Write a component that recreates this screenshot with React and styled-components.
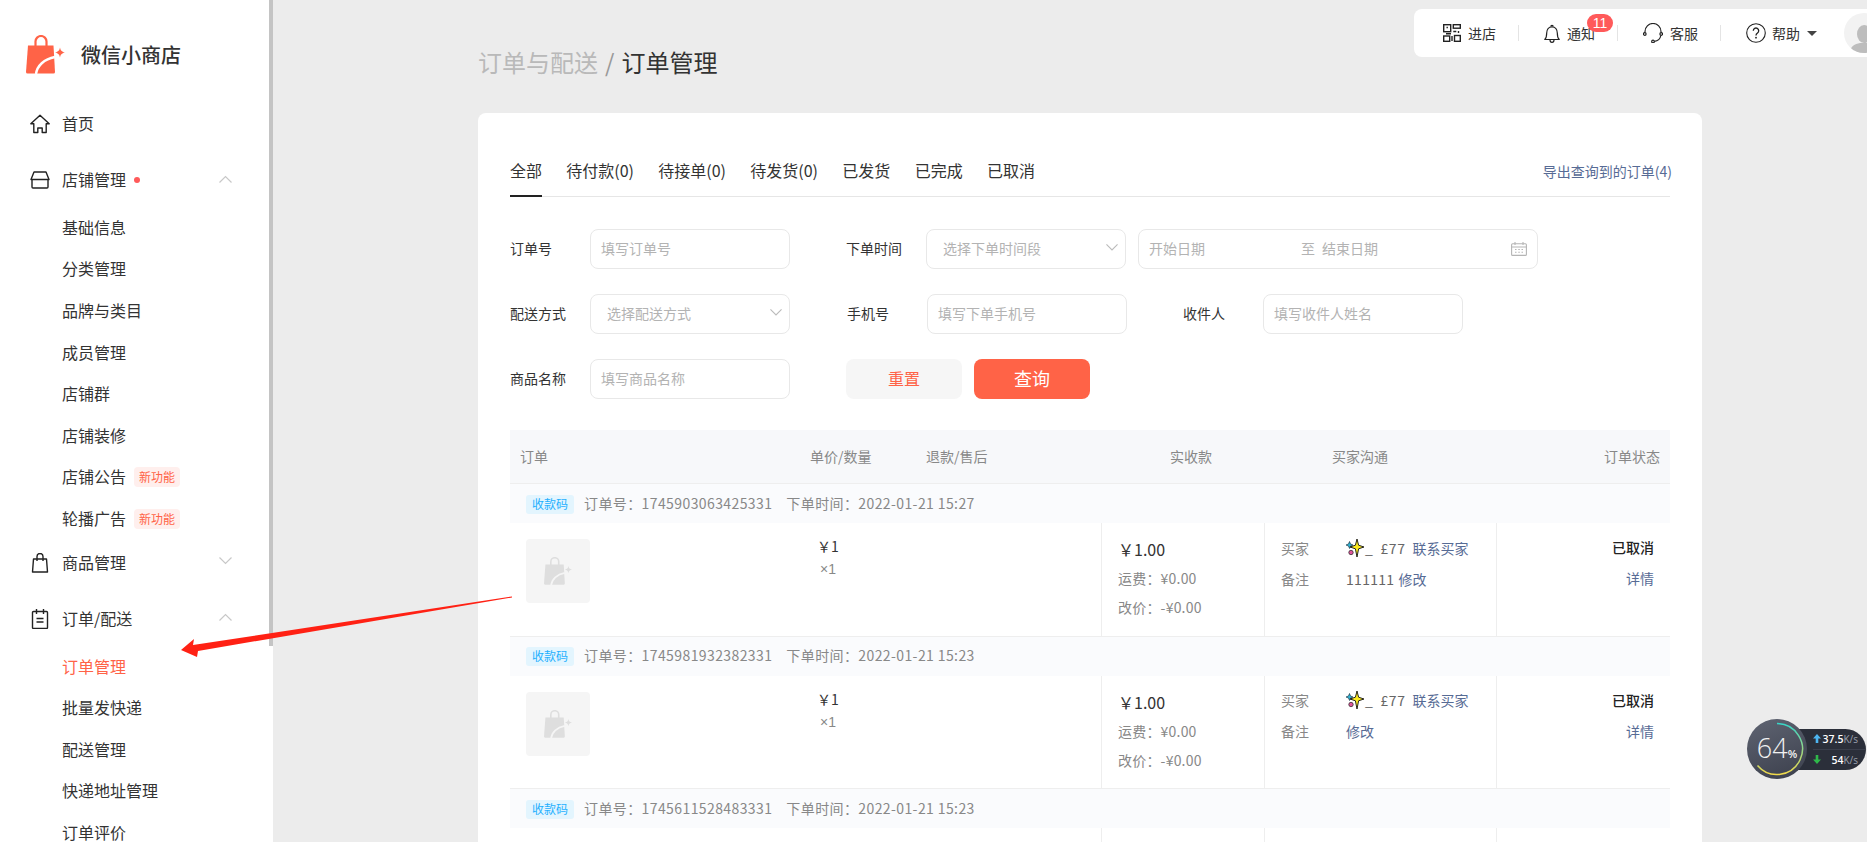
import styled, { createGlobalStyle } from "styled-components"

const GlobalStyle = createGlobalStyle`
  html, body {
    margin: 0;
    padding: 0;
    height: 100%;
    overflow: hidden;
    background: #ececec;
    font-family: "Noto Sans CJK SC", "Noto Sans", sans-serif;
    color: #333;
  }
  * { box-sizing: border-box; }
`

const orange = "#ff6347"
const linkBlue = "#576b95"

const orders = [
  { id: "1745903063425331", time: "2022-01-21 15:27", note: "111111" },
  { id: "1745981932382331", time: "2022-01-21 15:23", note: "" },
  { id: "1745611528483331", time: "2022-01-21 15:23", note: "" },
]

const BagLogo = ({ size = 39, color = orange, arc = "#fff" }) => (
  <svg width={size} height={size} viewBox="0 0 39 39">
    <path d="M9.5 11V6.5a5.5 5.5 0 0 1 11 0V11" fill="none" stroke={color} strokeWidth="2.2" />
    <path d="M2 10.5h25.5L29 37a1.5 1.5 0 0 1-1.5 1.5H1.5A1.500 1.500 0 0 1 0 37z" fill={color} />
    <path d="M10 39C11 31 18 24 29 22" fill="none" stroke={arc} strokeWidth="2.4" />
    <path d="M34 12.500c.6 3 1.600 4.200 5 5-3.400.8-4.400 2-5 5-.6-3-1.600-4.200-5-5 3.400-.8 4.400-2 5-5z" fill={color} />
  </svg>
)

const HomeIcon = () => (
  <svg width="20" height="20" viewBox="0 0 20 20" fill="none" stroke="#222" strokeWidth="1.4">
    <path d="M.8 9.700 10 1.200l9.200 8.500h-3v8.800h-4v-4.500h-4.400v4.500h-4V9.700z" strokeLinejoin="round" />
  </svg>
)

const StoreIcon = () => (
  <svg width="20" height="18" viewBox="0 0 20 18" fill="none" stroke="#222" strokeWidth="1.4">
    <path d="M4 1h12l3 7.500H1z" strokeLinejoin="round" />
    <path d="M2 8.500V16a1 1 0 0 0 1 1h14a1 1 0 0 0 1-1V8.500" />
  </svg>
)

const ShopBagIcon = () => (
  <svg width="20" height="20" viewBox="0 0 20 20" fill="none" stroke="#222" strokeWidth="1.4">
    <path d="M3.500 6h13l1 13h-15z" strokeLinejoin="round" />
    <path d="M7 8V3.500a3 3 0 0 1 6 0V8" />
  </svg>
)

const NoteIcon = () => (
  <svg width="20" height="20" viewBox="0 0 20 20" fill="none" stroke="#222" strokeWidth="1.4">
    <rect x="2.500" y="2.500" width="15" height="17" rx="1" />
    <path d="M6.500 0v5M13.500 0v5M6.500 9.500h7M6.500 13h7" />
  </svg>
)

const Chevron = ({ up, color = "#c8c8c8", width = 13 }) => (
  <svg width={width} height={(width * 8) / 13} viewBox="0 0 13 8" fill="none" stroke={color} strokeWidth="1.200">
    <path d={up ? "M.5 7.500 6.500 1.500l6 6" : "M.5.500l6 6 6-6"} />
  </svg>
)

const QrIcon = () => (
  <svg width="18" height="18" viewBox="0 0 18 18" fill="none" stroke="#222" strokeWidth="1.400">
    <rect x=".7" y=".7" width="7" height="7" />
    <rect x="10.300" y=".7" width="7" height="3.500" />
    <rect x=".7" y="12" width="6" height="5.300" />
    <rect x="11.500" y="11.500" width="5.800" height="5.800" />
    <path d="M3.500 3.500h1.400M10.300 7.500h3M15.500 7v2M9 12v5M3 9.800h5" />
  </svg>
)

const BellIcon = () => (
  <svg width="16" height="20" viewBox="0 0 16 20" fill="none" stroke="#222" strokeWidth="1.200">
    <path d="M.8 16.500c1.500-1.500 1.900-3 1.900-6.500 0-3.500 2-6.200 5.300-6.200s5.300 2.700 5.300 6.200c0 3.500.4 5 1.900 6.500z" strokeLinejoin="round" />
    <path d="M6.800 3.500a1.200 1.200 0 0 1 2.400 0M6 17c0 1.500 1 2.300 2 2.300s2-.8 2-2.300" />
  </svg>
)

const HeadsetIcon = () => (
  <svg width="20" height="20" viewBox="0 0 20 20" fill="none" stroke="#222" strokeWidth="1.200">
    <path d="M2 9.500V8.500a8 8 0 0 1 16 0v1" />
    <circle cx="1.800" cy="11" r="1.300" />
    <circle cx="18.200" cy="11" r="1.300" />
    <path d="M17.800 12.500c-.6 3.500-3 5.500-6.500 5.800" />
    <circle cx="10" cy="18.500" r="1.300" />
  </svg>
)

const HelpIcon = () => (
  <svg width="20" height="20" viewBox="0 0 20 20" fill="none" stroke="#222" strokeWidth="1.100">
    <circle cx="10" cy="10" r="9.300" />
    <path d="M7.300 7.700a2.700 2.700 0 1 1 4.200 2.300c-1 .7-1.500 1.200-1.500 2.400" strokeWidth="1.300" />
    <circle cx="10" cy="14.700" r=".9" fill="#222" stroke="none" />
  </svg>
)

const CalendarIcon = () => (
  <svg width="16" height="14" viewBox="0 0 16 14" fill="none" stroke="#b5b5b5" strokeWidth="1.100">
    <rect x=".6" y="1.800" width="14.800" height="11.600" rx="1" />
    <path d="M.6 5h14.800M4 0v3M12 0v3" />
    <path d="M4 7.500h1.500M7.300 7.500h1.500M10.500 7.500H12M4 10.300h1.500M7.300 10.300h1.500M10.500 10.300H12" />
  </svg>
)

const SparkleEmoji = () => (
  <svg width="18" height="18" viewBox="0 0 18 18">
    <path d="M3.500 2.500 4.500 5l2.500 1-2.500 1-1 2.500-1-2.500L0 6l2.500-1z" fill="#2fb7d8" stroke="#123" strokeWidth=".6" />
    <circle cx="5" cy="13.500" r="2.200" fill="#e0559a" stroke="#222" strokeWidth=".7" />
    <path d="M11 0l1.600 6.200L18 8l-5.400 1.800L11 18 9.400 9.800 4 8l5.400-1.800z" fill="#fdeb1f" stroke="#111" strokeWidth=".9" strokeLinejoin="round" />
  </svg>
)

const SpeedArrowIcon = ({ down, color }) => (
  <svg width="8" height="9" viewBox="0 0 8 9" fill={color}>
    <path d={down ? "M2.700 0h2.600v4.500H8L4 9 0 4.500h2.700z" : "M4 0l4 4.500H5.300V9H2.700V4.500H0z"} />
  </svg>
)

const Page = styled.div`
  display: flex;
  position: relative;
  width: 100vw;
  height: 100vh;
  overflow: hidden;
`

const Sidebar = styled.aside`
  flex: 0 0 273px;
  display: flex;
  background: #fff;
  height: 100%;
  overflow: hidden;
`

const SideNav = styled.nav`
  flex: 0 0 269px;
`

const ScrollThumb = styled.div`
  flex: 0 0 4px;
  height: 646px;
  background: #c4c4c4;
`

const Brand = styled.div`
  display: flex;
  align-items: center;
  height: 96px;
  padding: 13px 0 0 26px;
  svg { flex: none; }
`

const BrandName = styled.span`
  margin-left: 16px;
  font-size: 20px;
  font-weight: 500;
  color: #333;
`

const ParentItem = styled.div`
  display: flex;
  align-items: center;
  height: 56px;
  padding: 0 0 2px 30px;
  font-size: 16px;
  color: #333;
`

const IconSlot = styled.span`
  flex: 0 0 20px;
  display: flex;
  justify-content: center;
  margin: 2px 12px 0 0;
`

const RedDot = styled.i`
  width: 6px;
  height: 6px;
  margin: 2px 0 0 8px;
  border-radius: 50%;
  background: #ff5a5a;
`

const ChevronSlot = styled.span`
  display: flex;
  margin-left: auto;
  margin-right: 37px;
  margin-top: -1px;
`

const SubList = styled.div`
  margin: -1px 0 -5px;
`

const SubItem = styled.div`
  display: flex;
  align-items: center;
  height: 41.6px;
  padding: 0 0 2px 62px;
  font-size: 16px;
  color: ${(p) => (p.$active ? orange : "#333")};
`

const NewBadge = styled.span`
  width: 46px;
  height: 20px;
  margin: 2px 0 0 8px;
  border-radius: 4px;
  background: #ffefed;
  color: ${orange};
  font-size: 12px;
  line-height: 19px;
  text-align: center;
`

const Main = styled.main`
  flex: 1;
  min-width: 0;
  height: 100%;
  overflow: hidden;
`

const Header = styled.header`
  display: flex;
  align-items: flex-start;
  height: 113px;
  padding-left: 205px;
`

const PageTitle = styled.h1`
  margin: 44px 0 0;
  font-size: 24px;
  font-weight: 400;
  line-height: 36px;
  color: #333;
  span { color: #b9b9b9; }
  i { margin: 0 7px; font-style: normal; color: #999; }
`

const TopBar = styled.div`
  display: flex;
  align-items: center;
  width: 453px;
  height: 48px;
  margin: 9px 0 0 auto;
  padding-left: 29px;
  background: #fff;
  border-radius: 8px 0 0 8px;
  overflow: hidden;
`

const TopItem = styled.div`
  position: relative;
  display: flex;
  align-items: center;
  gap: ${(p) => p.$gap ?? 7}px;
  font-size: 14px;
  color: #333;
  white-space: nowrap;
`

const TopDivider = styled.i`
  flex: none;
  width: 1px;
  height: 16px;
  margin: 0 25px 0 22px;
  background: #e4e4e4;
`

const CountBadge = styled.span`
  position: absolute;
  left: 43px;
  top: -9px;
  width: 26px;
  height: 18px;
  border-radius: 9px;
  background: #ff5a5a;
  color: #fff;
  font-family: "Liberation Sans", sans-serif;
  font-size: 14px;
  line-height: 18px;
  text-align: center;
`

const Caret = styled.i`
  width: 0;
  height: 0;
  margin-left: 1px;
  border-left: 5px solid transparent;
  border-right: 5px solid transparent;
  border-top: 5px solid #444;
`

const Avatar = styled.div`
  flex: none;
  display: flex;
  justify-content: center;
  align-items: flex-end;
  width: 40px;
  height: 40px;
  margin-left: 27px;
  border-radius: 50%;
  background: #f2f2f2;
  overflow: hidden;
`

const Card = styled.section`
  width: 1224px;
  height: 900px;
  margin-left: 205px;
  padding: 40px 32px 0;
  background: #fff;
  border-radius: 8px;
`

const Tabs = styled.div`
  display: flex;
  align-items: flex-start;
  gap: 24.3px;
  height: 44px;
  border-bottom: 1px solid #e6e6e6;
`

const Tab = styled.div`
  height: 44px;
  font-size: 16px;
  line-height: 34px;
  color: #333;
  border-bottom: 2px solid ${(p) => (p.$active ? "#222" : "transparent")};
`

const ExportLink = styled.a`
  margin: 0 -2px 0 auto;
  font-size: 14px;
  line-height: 36px;
  color: ${linkBlue};
`

const Form = styled.div`
  display: flex;
  flex-direction: column;
  gap: 25px;
  margin-top: 32px;
`

const FormRow = styled.div`
  display: flex;
  align-items: center;
  height: 40px;
`

const Field = styled.label`
  display: flex;
  align-items: center;
  margin-right: ${(p) => p.$gap ?? 56}px;
`

const FieldLabel = styled.span`
  flex: 0 0 80px;
  padding-bottom: 2px;
  font-size: 14px;
  color: #333;
`

const TextInput = styled.input`
  width: 200px;
  height: 40px;
  padding: 0 10px 2px;
  border: 1.5px solid #e8e8e8;
  border-radius: 8px;
  outline: none;
  background: #fff;
  font: inherit;
  font-size: 14px;
  &::placeholder { color: #b3b3b3; opacity: 1; }
`

const SelectBox = styled.div`
  display: flex;
  align-items: center;
  justify-content: space-between;
  width: 200px;
  height: 40px;
  padding: 0 7px 2px 16px;
  border: 1.5px solid #e8e8e8;
  border-radius: 8px;
  font-size: 14px;
  color: #b3b3b3;
`

const DateRange = styled.div`
  display: flex;
  align-items: center;
  width: 400px;
  height: 40px;
  margin-left: -44px;
  padding: 0 10px 2px;
  border: 1.5px solid #e8e8e8;
  border-radius: 8px;
  font-size: 14px;
  color: #b3b3b3;
`

const DateStart = styled.span`
  flex: 0 0 152px;
`

const DateTo = styled.span`
  margin-right: 7px;
`

const CalendarSlot = styled.span`
  display: flex;
  margin: 2px 0 0 auto;
`

const ResetButton = styled.button`
  width: 116px;
  height: 40px;
  padding: 0 0 2px;
  border: none;
  border-radius: 8px;
  background: #f6f6f6;
  color: ${orange};
  font: inherit;
  font-size: 16px;
`

const SearchButton = styled(ResetButton)`
  margin-left: 12px;
  background: ${orange};
  color: #fff;
  font-size: 18px;
`

const Table = styled.div`
  margin-top: 31px;
`

const TableHead = styled.div`
  display: grid;
  grid-template-columns: 290px 116px 244px 162px 1fr 1fr;
  align-items: center;
  height: 54px;
  padding: 0 10px 2px;
  background: #f7f8fa;
  border-bottom: 1px solid #eee;
  font-size: 14px;
  color: #888;
`

const HeadCell = styled.span`
  text-align: ${(p) => (p.$right ? "right" : "left")};
`

const OrderBar = styled.div`
  display: flex;
  align-items: center;
  height: 39px;
  padding: 0 0 2px 16px;
  background: #fafbfd;
  font-size: 14px;
  color: #888;
`

const PayTag = styled.span`
  width: 48px;
  height: 19px;
  margin: 3px 10px 0 0;
  border-radius: 3px;
  background: #e3f5fe;
  color: #1fb0ff;
  font-size: 12px;
  line-height: 18px;
  text-align: center;
`

const OrderNo = styled.span`
  margin-right: 14px;
  letter-spacing: 0.4px;
`

const OrderTime = styled.span`
  letter-spacing: 0.4px;
`

const OrderBody = styled.div`
  display: grid;
  grid-template-columns: 591px 163px 232px 174px;
  height: 113.5px;
  border-bottom: 1px solid #eee;
`

const GoodsCell = styled.div`
  display: flex;
  padding: 16px 0 0 16px;
`

const Thumb = styled.div`
  flex: 0 0 64px;
  display: flex;
  align-items: center;
  justify-content: center;
  height: 64px;
  border-radius: 4px;
  background: #f5f5f5;
`

const GoodsPrice = styled.div`
  margin: -4px 0 0 227px;
  font-size: 14px;
  line-height: 23px;
  color: #333;
`

const GoodsQty = styled.div`
  margin-left: 3px;
  font-family: "Liberation Sans", sans-serif;
  color: #888;
`

const Cell = styled.div`
  padding: ${(p) => p.$top ?? 9}px 16px 0;
  border-left: 1px solid #eee;
  font-size: 14px;
`

const Amount = styled.div`
  font-size: 16px;
  line-height: 29px;
  color: #333;
`

const AmountNote = styled.div`
  line-height: 29px;
  letter-spacing: 0.2px;
  color: #888;
`

const InfoRow = styled.div`
  display: flex;
  align-items: center;
  height: 31px;
  color: #666;
`

const InfoLabel = styled.span`
  flex: 0 0 65px;
  color: #888;
`

const Buyer = styled.span`
  display: flex;
  align-items: center;
  gap: 1px;
  margin-right: 7px;
  letter-spacing: 0.5px;
  white-space: nowrap;
`

const NoteText = styled.span`
  letter-spacing: 0.3px;
`

const BlueLink = styled.a`
  margin-left: ${(p) => p.$gap ?? 0}px;
  color: ${linkBlue};
  white-space: nowrap;
`

const StatusCell = styled(Cell)`
  text-align: right;
`

const StatusText = styled.div`
  height: 31px;
  line-height: 31px;
  font-weight: 500;
  color: #222;
`

const DetailLine = styled.div`
  height: 31px;
  line-height: 31px;
`

const ArrowLayer = styled.svg`
  position: absolute;
  left: 0;
  top: 0;
  pointer-events: none;
`

const NetWidget = styled.div`
  position: absolute;
  left: 1747px;
  top: 719px;
  display: flex;
  align-items: center;
`

const Gauge = styled.div`
  position: relative;
  z-index: 1;
  display: flex;
  align-items: baseline;
  justify-content: center;
  width: 60px;
  height: 60px;
  padding-top: 12px;
  border-radius: 50%;
  background: linear-gradient(160deg, #5f6472, #3b3f4c);
  color: #f2f2f2;
  font-family: "Open Sans", sans-serif;
  font-weight: 300;
  font-size: 27px;
  line-height: 34px;
  small { font-size: 11px; font-weight: 600; }
`

const GaugeRing = styled.svg`
  position: absolute;
  inset: 0;
`

const SpeedPill = styled.div`
  display: flex;
  flex-direction: column;
  width: 90px;
  height: 41px;
  margin-left: -31px;
  padding-left: 37px;
  border-radius: 0 21px 21px 0;
  background: #2b2f3a;
`

const SpeedRow = styled.div`
  display: flex;
  align-items: center;
  justify-content: space-between;
  flex: 1;
  padding-right: 8px;
  color: #fff;
  font-family: "Open Sans", sans-serif;
  font-size: 10.5px;
  font-weight: 600;
  small { font-size: 10px; font-weight: 400; color: #9aa0ad; }
  & + & { border-top: 1px solid #3b3f4c; }
`

const storeSubs = ["基础信息", "分类管理", "品牌与类目", "成员管理", "店铺群", "店铺装修"]
const orderSubs = ["批量发快递", "配送管理", "快递地址管理", "订单评价"]
const tabs = ["全部", "待付款(0)", "待接单(0)", "待发货(0)", "已发货", "已完成", "已取消"]

const OrderRow = ({ order }) => (
  <>
    <OrderBar>
      <PayTag>收款码</PayTag>
      <OrderNo>订单号：{order.id}</OrderNo>
      <OrderTime>下单时间：{order.time}</OrderTime>
    </OrderBar>
    <OrderBody>
      <GoodsCell>
        <Thumb>
          <BagLogo size={28} color="#dedede" arc="#f5f5f5" />
        </Thumb>
        <GoodsPrice>
          ￥1
          <GoodsQty>×1</GoodsQty>
        </GoodsPrice>
      </GoodsCell>
      <Cell $top={12}>
        <Amount>￥1.00</Amount>
        <AmountNote>运费：¥0.00</AmountNote>
        <AmountNote>改价：-¥0.00</AmountNote>
      </Cell>
      <Cell>
        <InfoRow>
          <InfoLabel>买家</InfoLabel>
          <Buyer>
            <SparkleEmoji />_ &nbsp;£77
          </Buyer>
          <BlueLink>联系买家</BlueLink>
        </InfoRow>
        <InfoRow>
          <InfoLabel>备注</InfoLabel>
          <NoteText>{order.note}</NoteText>
          <BlueLink $gap={order.note ? 4 : 0}>修改</BlueLink>
        </InfoRow>
      </Cell>
      <StatusCell>
        <StatusText>已取消</StatusText>
        <DetailLine>
          <BlueLink>详情</BlueLink>
        </DetailLine>
      </StatusCell>
    </OrderBody>
  </>
)

const App = () => {
  return (
    <>
      <GlobalStyle />
      <Page>
        <Sidebar>
          <SideNav>
            <Brand>
              <BagLogo />
              <BrandName>微信小商店</BrandName>
            </Brand>
            <ParentItem>
              <IconSlot><HomeIcon /></IconSlot>首页
            </ParentItem>
            <ParentItem>
              <IconSlot><StoreIcon /></IconSlot>店铺管理<RedDot />
              <ChevronSlot><Chevron up /></ChevronSlot>
            </ParentItem>
            <SubList>
              {storeSubs.map((s) => <SubItem key={s}>{s}</SubItem>)}
              <SubItem>店铺公告<NewBadge>新功能</NewBadge></SubItem>
              <SubItem>轮播广告<NewBadge>新功能</NewBadge></SubItem>
            </SubList>
            <ParentItem>
              <IconSlot><ShopBagIcon /></IconSlot>商品管理
              <ChevronSlot><Chevron /></ChevronSlot>
            </ParentItem>
            <ParentItem>
              <IconSlot><NoteIcon /></IconSlot>订单/配送
              <ChevronSlot><Chevron up /></ChevronSlot>
            </ParentItem>
            <SubList>
              <SubItem $active>订单管理</SubItem>
              {orderSubs.map((s) => <SubItem key={s}>{s}</SubItem>)}
            </SubList>
          </SideNav>
          <ScrollThumb />
        </Sidebar>

        <Main>
          <Header>
            <PageTitle><span>订单与配送</span><i>/</i>订单管理</PageTitle>
            <TopBar>
              <TopItem><QrIcon />进店</TopItem>
              <TopDivider />
              <TopItem><BellIcon />通知<CountBadge>11</CountBadge></TopItem>
              <TopDivider />
              <TopItem><HeadsetIcon />客服</TopItem>
              <TopDivider />
              <TopItem $gap={6}><HelpIcon />帮助<Caret /></TopItem>
              <Avatar>
                <svg width="28" height="30" viewBox="0 0 28 30" fill="#bdbdbd">
                  <ellipse cx="14" cy="11" rx="7" ry="9" />
                  <path d="M0 30c0-7 5-9 10-10h8c5 1 10 3 10 10z" />
                </svg>
              </Avatar>
            </TopBar>
          </Header>

          <Card>
            <Tabs>
              {tabs.map((t, i) => <Tab key={t} $active={i === 0}>{t}</Tab>)}
              <ExportLink>导出查询到的订单(4)</ExportLink>
            </Tabs>

            <Form>
              <FormRow>
                <Field>
                  <FieldLabel>订单号</FieldLabel>
                  <TextInput placeholder="填写订单号" />
                </Field>
                <Field>
                  <FieldLabel>下单时间</FieldLabel>
                  <SelectBox>选择下单时间段<Chevron color="#bbb" width={12} /></SelectBox>
                </Field>
                <DateRange>
                  <DateStart>开始日期</DateStart>
                  <DateTo>至</DateTo>
                  结束日期
                  <CalendarSlot><CalendarIcon /></CalendarSlot>
                </DateRange>
              </FormRow>
              <FormRow>
                <Field $gap={57}>
                  <FieldLabel>配送方式</FieldLabel>
                  <SelectBox>选择配送方式<Chevron color="#bbb" width={12} /></SelectBox>
                </Field>
                <Field $gap={56}>
                  <FieldLabel>手机号</FieldLabel>
                  <TextInput placeholder="填写下单手机号" />
                </Field>
                <Field>
                  <FieldLabel>收件人</FieldLabel>
                  <TextInput placeholder="填写收件人姓名" />
                </Field>
              </FormRow>
              <FormRow>
                <Field>
                  <FieldLabel>商品名称</FieldLabel>
                  <TextInput placeholder="填写商品名称" />
                </Field>
                <ResetButton>重置</ResetButton>
                <SearchButton>查询</SearchButton>
              </FormRow>
            </Form>

            <Table>
              <TableHead>
                <HeadCell>订单</HeadCell>
                <HeadCell>单价/数量</HeadCell>
                <HeadCell>退款/售后</HeadCell>
                <HeadCell>实收款</HeadCell>
                <HeadCell>买家沟通</HeadCell>
                <HeadCell $right>订单状态</HeadCell>
              </TableHead>
              {orders.map((o) => <OrderRow key={o.id} order={o} />)}
            </Table>
          </Card>
        </Main>

        <ArrowLayer width="1867" height="842">
          <polygon points="181,650 194,639 193,645 512,596.500 512,597.500 198,651 197,657" fill="#ff2114" />
        </ArrowLayer>

        <NetWidget>
          <Gauge>
            <GaugeRing viewBox="0 0 60 60" fill="none">
              <defs>
                <linearGradient id="ringGrad" x1="0" y1="0" x2="0" y2="1">
                  <stop offset="0" stopColor="#37d6c8" />
                  <stop offset="1" stopColor="#f1d94a" />
                </linearGradient>
              </defs>
              <path d="M30 4.500A25.500 25.500 0 1 1 10.500 46.500" stroke="url(#ringGrad)" strokeWidth="1.500" />
            </GaugeRing>
            64<small>%</small>
          </Gauge>
          <SpeedPill>
            <SpeedRow><SpeedArrowIcon color="#4db6f2" /><span>37.5<small>K/s</small></span></SpeedRow>
            <SpeedRow><SpeedArrowIcon down color="#2fb84a" /><span>54<small>K/s</small></span></SpeedRow>
          </SpeedPill>
        </NetWidget>
      </Page>
    </>
  )
}

export default App
